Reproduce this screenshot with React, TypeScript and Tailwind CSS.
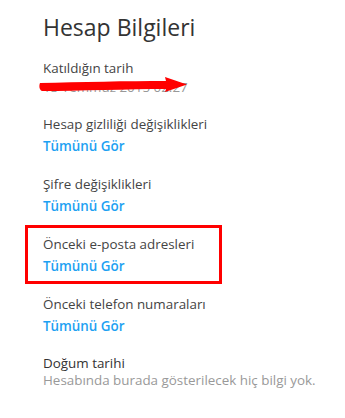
const sections = [
  { label: "Hesap gizliliği değişiklikleri", highlight: false },
  { label: "Şifre değişiklikleri", highlight: false },
  { label: "Önceki e-posta adresleri", highlight: true },
  { label: "Önceki telefon numaraları", highlight: false },
]

export default function App() {
  return (
    <div
      className="w-[345px] h-[418px] bg-white overflow-hidden pl-[43px] pt-[11px]"
      style={{ fontFamily: '"Open Sans", "Noto Sans", sans-serif' }}
    >
      <h1 className="text-[23px] leading-[32px] text-[#333]">Hesap Bilgileri</h1>

      <div className="mt-[16px] relative">
        <p className="text-[13.4px] leading-[18px] text-[#444]">Katıldığın tarih</p>
        <p className="text-[13.4px] leading-[18px] text-[#999] mt-[1px]">13 Temmuz 2015 02:27</p>
        <svg
          className="absolute left-[-4px] top-[18px]"
          width="150"
          height="17"
          viewBox="0 0 150 17"
        >
          <path
            d="M1 6 C 40 5, 90 4, 127 4 L 126 0 L 148 7.5 L 126 15 L 127 12 C 90 12, 40 14, 3 14 C 0 13, 0 8, 1 6 Z"
            fill="#ff0000"
          />
        </svg>
      </div>

      <div className="flex flex-col mt-[19px]">
        {sections.map((s) => (
          <div key={s.label} className="relative h-[60px]">
            {s.highlight && (
              <span className="absolute left-[-18px] top-[-10px] w-[197px] h-[59px] border-[3px] border-[#ff0000]" />
            )}
            <p className="text-[13.4px] leading-[18px] text-[#444]">{s.label}</p>
            <p className="text-[13.4px] leading-[18px] font-semibold text-[#1da1f2] mt-[4px]">Tümünü Gör</p>
          </div>
        ))}
        <div>
          <p className="text-[13.4px] leading-[17px] text-[#333]">Doğum tarihi</p>
          <p className="text-[13.4px] leading-[17px] text-[#999]">Hesabında burada gösterilecek hiç bilgi yok.</p>
        </div>
      </div>
    </div>
  )
}
